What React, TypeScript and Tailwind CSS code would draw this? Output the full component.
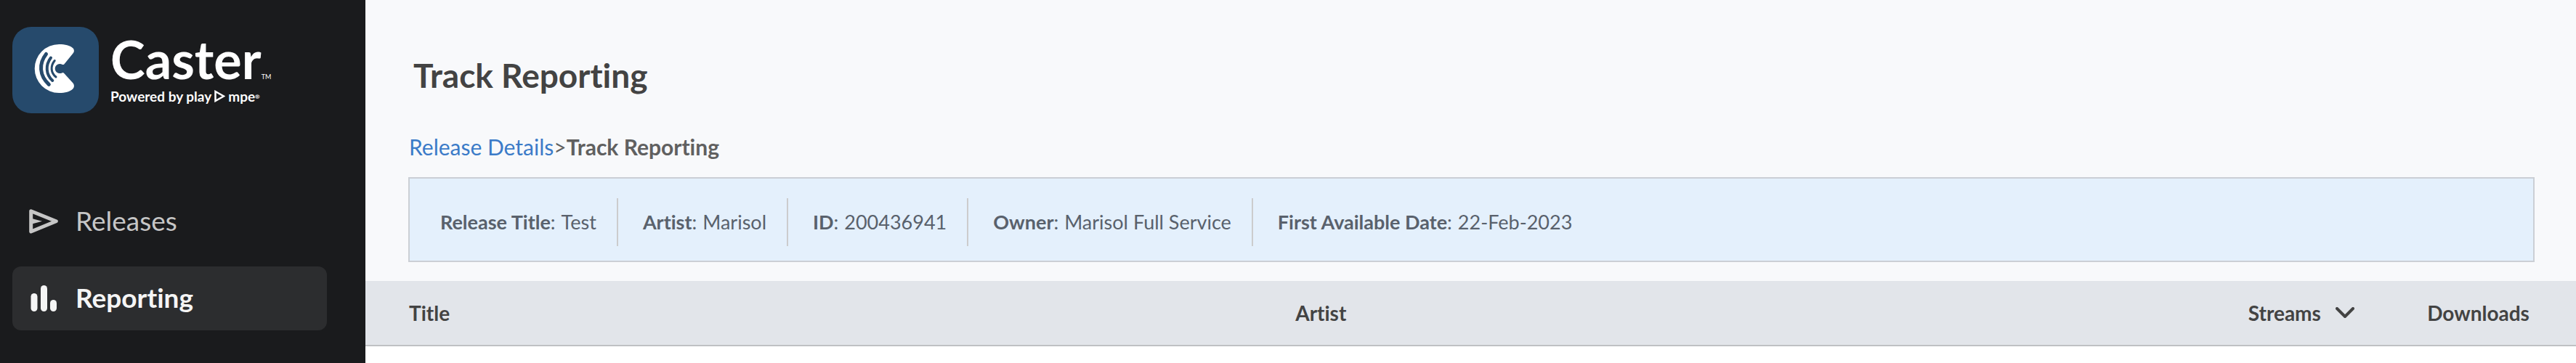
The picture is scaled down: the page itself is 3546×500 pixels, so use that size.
import React from 'react';

interface ReleaseField {
    label: string;
    value: string;
}

const releaseFields: ReleaseField[] = [
    { label: 'Release Title', value: 'Test' },
    { label: 'Artist', value: 'Marisol' },
    { label: 'ID', value: '200436941' },
    { label: 'Owner', value: 'Marisol Full Service' },
    { label: 'First Available Date', value: '22-Feb-2023' },
];

const CasterMark = () => (
    <svg viewBox="0 0 119 119" className="size-[119px] shrink-0" aria-hidden="true">
        <rect width="119" height="119" rx="26" fill="#264a6c" />
        <path
            d="M64.2 24C73 24 79 25.800 83 29C85.500 31.200 85.500 34.500 83.300 36.700L71.500 51.200Q70.500 52.500 68.800 51.900A6.600 6.600 0 1 0 68.300 63.400Q69.800 62.500 71 63.800L83.300 77.300C85.500 79.600 85.500 83.500 83 85.700C79 89.200 73 91 64.200 91A33.500 33.500 0 0 1 64.200 24Z"
            fill="#fff"
        />
        <g fill="none" stroke="#264a6c" strokeLinecap="round">
            <path d="M46.500 37.500C36.300 50.500 37 67 50.300 79.300" strokeWidth="5" />
            <path d="M53 42.500C45.300 52.500 46 65.500 55.300 74" strokeWidth="4" />
            <path d="M58.200 46.500C52.300 54 52.700 63 60 69" strokeWidth="3" />
        </g>
    </svg>
);

const Logo = () => (
    <a href="#" className="flex items-center gap-4 text-white">
        <CasterMark />
        <span className="flex flex-col gap-1 pb-1 font-bold whitespace-nowrap">
            <span className="flex items-baseline text-[72px] leading-[72px]">
                Caster
                <span className="text-[9px] leading-none font-normal">TM</span>
            </span>
            <span className="flex items-center gap-1 text-[19px] leading-6">
                <span>Powered by play</span>
                <svg viewBox="0 0 15 17" className="h-[17px] w-[15px]" fill="none" stroke="currentColor" strokeWidth="2.500" aria-hidden="true">
                    <path d="M1.500 2L13 8.500L1.500 15Z" />
                </svg>
                <span>
                    mpe<sup className="text-[8px]">®</sup>
                </span>
            </span>
        </span>
    </a>
);

const SendIcon = () => (
    <svg viewBox="0 0 40 34" className="h-[34px] w-10" fill="none" stroke="currentColor" strokeLinejoin="round" aria-hidden="true">
        <path d="M2.700 2.700L37.300 16.800L2.700 31Z" strokeWidth="5" />
        <path d="M4 13L18 16.800L4 20.600Z" fill="currentColor" stroke="none" />
    </svg>
);

const BarsIcon = () => (
    <svg viewBox="0 0 40 36" className="h-9 w-10" fill="currentColor" aria-hidden="true">
        <rect x="2.500" y="11" width="9" height="25" rx="4.500" />
        <rect x="16" y="0" width="9" height="36" rx="4.500" />
        <rect x="29" y="20" width="9" height="16" rx="4.500" />
    </svg>
);

interface NavItemProps {
    icon: React.ReactNode;
    label: string;
    active?: boolean;
}

const NavItem: React.FC<NavItemProps> = ({ icon, label, active }) => (
    <a
        href="#"
        aria-current={active ? 'page' : undefined}
        className={`flex h-[88px] items-center gap-6 rounded-xl pl-[23px] text-[37px] leading-[44px] ${
            active ? 'bg-[#2c2d2f] font-bold text-[#f5f5f5]' : 'text-[#c6c6c6]'
        }`}
    >
        {icon}
        <span className="pb-0.5">{label}</span>
    </a>
);

const Sidebar = () => (
    <aside className="w-[503px] shrink-0 bg-[#1a1b1d] pt-[37px] pr-[53px] pl-[17px]">
        <Logo />
        <nav className="mt-[105px] flex flex-col gap-[18px]">
            <NavItem icon={<SendIcon />} label="Releases" />
            <NavItem icon={<BarsIcon />} label="Reporting" active />
        </nav>
    </aside>
);

const ReleaseSummary = () => (
    <dl className="mr-[57px] ml-[59px] flex h-[117px] items-center border-2 border-[#cbcfd5] bg-[#e4f0fc] pt-[6px] pl-2 text-[27px] leading-8 text-[#59616c]">
        {releaseFields.map((field) => (
            <div
                key={field.label}
                className="flex h-[66px] items-center gap-2 border-r-2 border-[#cccccd] pr-7 pl-[34px] whitespace-nowrap last:border-r-0"
            >
                <dt>
                    <b>{field.label}</b>:
                </dt>
                <dd>{field.value}</dd>
            </div>
        ))}
    </dl>
);

const TrackTable = () => (
    <table className="w-full table-fixed text-left text-[28px] leading-8 text-[#434343]">
        <colgroup>
            <col className="w-[40.100%]" />
            <col className="w-[43.100%]" />
            <col className="w-[8.100%]" />
            <col />
        </colgroup>
        <thead className="border-b-2 border-[#bfc1c4] bg-[#e2e5ea]">
            <tr className="h-[89px] whitespace-nowrap">
                <th scope="col" className="pl-[60px]">Title</th>
                <th scope="col" className="pl-[60px]">Artist</th>
                <th scope="col" className="pl-[60px]" aria-sort="descending">
                    <button type="button" className="flex items-center gap-5 font-bold">
                        Streams
                        <svg viewBox="0 0 26 16" className="h-4 w-[26px]" fill="none" stroke="currentColor" strokeWidth="4" strokeLinecap="round" strokeLinejoin="round" aria-hidden="true">
                            <path d="M2 2L13 13L24 2" />
                        </svg>
                    </button>
                </th>
                <th scope="col" className="pl-[60px]">Downloads</th>
            </tr>
        </thead>
    </table>
);

export default function App() {
    return (
        <div className="flex min-h-screen bg-white font-[Lato,sans-serif] [font-variant-ligatures:none]">
            <Sidebar />
            <main className="min-w-0 flex-1">
                <div className="bg-[#f8f9fb] pt-[76px] pb-[26px]">
                    <h1 className="pl-[66px] text-[46px] leading-[56px] font-bold text-[#434343]">Track Reporting</h1>
                    <nav aria-label="Breadcrumb" className="mt-[52px] mb-[24px] pl-[60px] text-[30px] leading-9 text-[#606060]">
                        <a href="#" className="text-[#3b7bc8]">Release Details</a>
                        <span>&gt;</span>
                        <b>Track Reporting</b>
                    </nav>
                    <ReleaseSummary />
                </div>
                <TrackTable />
            </main>
        </div>
    );
}
